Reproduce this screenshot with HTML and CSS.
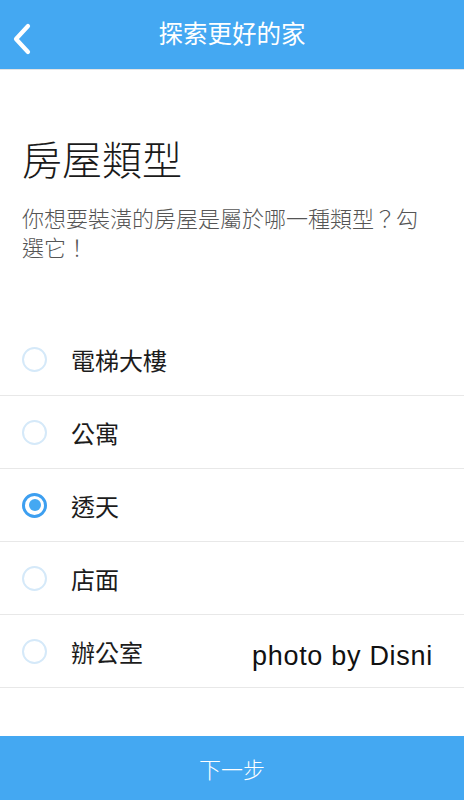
FILE: index.html
```html
<!DOCTYPE html>
<html lang="zh-Hant">
<head>
<meta charset="UTF-8">
<title>探索更好的家</title>
<link rel="stylesheet" href="styles.css">
</head>
<body>
<div class="app">
  <header class="topbar">
    <button class="back" aria-label="返回">
      <svg width="22" height="32" viewBox="0 0 22 32"><path d="M17 3 L5 16 L17 29" fill="none" stroke="#fff" stroke-width="4.2" stroke-linecap="round" stroke-linejoin="round"/></svg>
    </button>
    <h1 class="title">探索更好的家</h1>
  </header>

  <section class="intro">
    <h2>房屋類型</h2>
    <p>你想要裝潢的房屋是屬於哪一種類型？勾選它！</p>
  </section>

  <ul class="options">
    <li><span class="radio"></span>電梯大樓</li>
    <li><span class="radio"></span>公寓</li>
    <li class="checked"><span class="radio"></span>透天</li>
    <li><span class="radio"></span>店面</li>
    <li><span class="radio"></span>辦公室</li>
  </ul>

  <footer class="next">下一步</footer>

  <div class="credit">photo by Disni</div>
</div>
</body>
</html>
```

FILE: styles.css
```css
body{margin:0;background:#fff;font-family:"Noto Sans CJK TC","Noto Sans",sans-serif}
.app{position:relative;height:800px;display:flex;flex-direction:column}
.topbar{height:69px;background:#44a8f2;border-bottom:1px solid #e4e4e4;display:flex;align-items:center;justify-content:center;position:relative}
.back{position:absolute;left:9px;top:22px;background:none;border:none;padding:0;width:26px;height:34px;display:flex;align-items:center;justify-content:center}
.title{margin:0;color:#fff;font-size:24.5px;font-weight:400;line-height:1;margin-top:-2px}
.intro{padding:64px 40px 0 22px}
.intro h2{margin:0;font-size:40px;font-weight:300;line-height:48px;color:#1a1a1a}
.intro p{margin:21px 0 0;font-size:22px;line-height:29px;color:#555;font-weight:300}
.options{list-style:none;margin:62px 0 0;padding:0}
.options li{height:72px;border-bottom:1px solid #e8e8e8;display:flex;align-items:center;font-size:24px;color:#1c1c1c;padding-left:22px}
.radio{box-sizing:border-box;width:25px;height:25px;border-radius:50%;border:2px solid #d5e9f9;margin-right:24px;display:flex;align-items:center;justify-content:center}
.checked .radio{border:3px solid #3d9ff0}
.checked .radio::after{content:"";width:12px;height:12px;border-radius:50%;background:#44a8f2}
.next{margin-top:auto;height:64px;background:#44a8f2;color:#fff;font-size:22px;font-weight:300;display:flex;align-items:center;justify-content:center}
.credit{position:absolute;left:252px;top:641px;font-family:"Liberation Sans",Arial,sans-serif;font-size:27px;color:#111;letter-spacing:.7px;text-shadow:1px 1px 0 #fff,-1px 0 0 #fff}
```
